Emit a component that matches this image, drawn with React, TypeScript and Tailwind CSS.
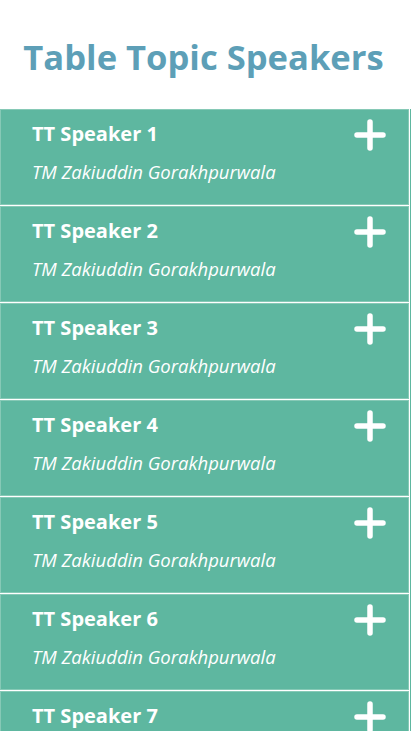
import React from "react";

const speakers = [1, 2, 3, 4, 5, 6, 7].map((n) => ({
  id: `tt-${n}`,
  title: `TT Speaker ${n}`,
  name: "TM Zakiuddin Gorakhpurwala",
}));

function PlusIcon() {
  return (
    <svg width="32" height="32" viewBox="0 0 32 32" fill="none" aria-hidden>
      <path
        d="M16 3v26M3 16h26"
        stroke="#ffffff"
        strokeWidth="5.5"
        strokeLinecap="round"
      />
    </svg>
  );
}

export default function App() {
  return (
    <div
      className="w-[411px] h-[731px] overflow-hidden bg-white"
      style={{ fontFamily: "'Open Sans', 'Noto Sans', sans-serif" }}
    >
      {/* Heading */}
      <div className="h-[109px] flex items-center justify-center pt-[4px] pr-[4px]">
        <h1 className="text-[34.6px] font-bold text-[#5d9fb7]">
          Table Topic Speakers
        </h1>
      </div>

      {/* Speaker list */}
      <div className="flex gap-px">
        <div className="w-[409px] flex flex-col gap-px">
          {speakers.map((s) => (
            <div
              key={s.id}
              className="h-[96px] shrink-0 bg-[#5eb7a0] border border-[#86c9b6] flex items-start pl-[31px] pr-[22px] pt-[9px]"
            >
              <div className="flex-1">
                <div className="text-[20px] font-bold text-white leading-[30px]">
                  {s.title}
                </div>
                <div className="mt-[10px] text-[18.5px] italic text-white leading-[26px] whitespace-nowrap">
                  {s.name}
                </div>
              </div>
              <div>
                <PlusIcon />
              </div>
            </div>
          ))}
        </div>
        <div className="w-px bg-[#5eb7a0]" />
      </div>
    </div>
  );
}
